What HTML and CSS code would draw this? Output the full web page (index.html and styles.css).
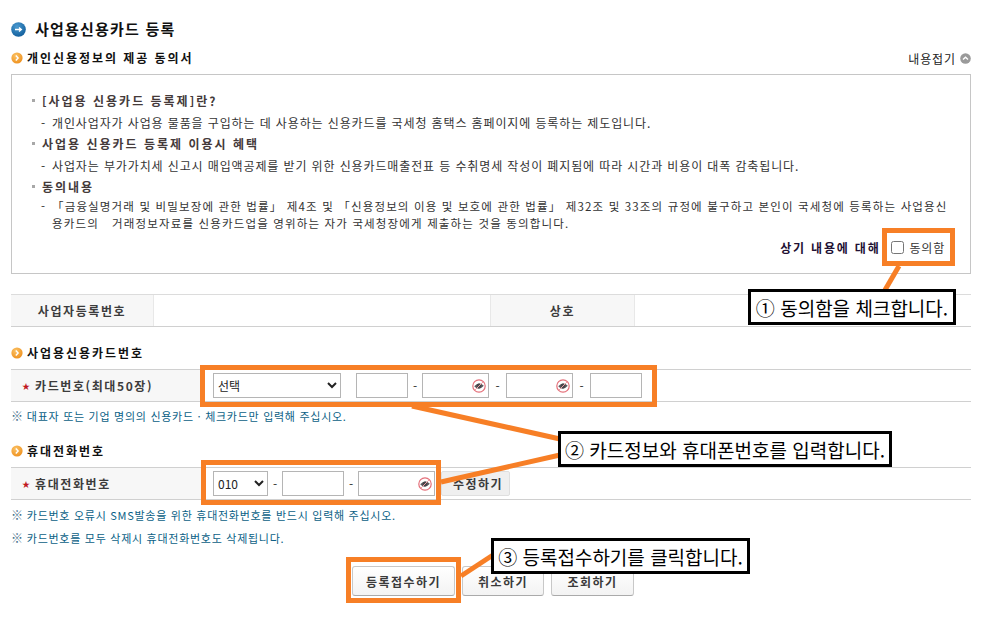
FILE: index.html
```html
<!DOCTYPE html>
<html lang="ko">
<head>
<meta charset="utf-8">
<title>사업용신용카드 등록</title>
<link rel="stylesheet" href="styles.css">
</head>
<body>
<svg class="defs" width="0" height="0" aria-hidden="true">
  <defs>
    <radialGradient id="gBlue" cx="40%" cy="30%" r="75%"><stop offset="0" stop-color="#4a9ad0"/><stop offset="1" stop-color="#0f5c9a"/></radialGradient>
    <radialGradient id="gOrange" cx="40%" cy="30%" r="75%"><stop offset="0" stop-color="#fbc265"/><stop offset="1" stop-color="#ee8f1c"/></radialGradient>
    <symbol id="sec" viewBox="0 0 12 12"><circle cx="6" cy="6" r="5.6" fill="url(#gOrange)"/><path d="M4.8 3.6 7.1 6 4.8 8.4" fill="none" stroke="#fff" stroke-width="1.4"/></symbol>
    <symbol id="eye" viewBox="0 0 14 14"><circle cx="7" cy="7" r="6.2" fill="#fff" stroke="#e4707a" stroke-width="1.2"/><path d="M2.2 7.2Q7 1.8 11.8 6.8 7 12.4 2.2 7.2Z" fill="#5c5c60"/><circle cx="7" cy="7" r="2.4" fill="#46464a"/><path d="M2.8 11.2 11.2 2.8" stroke="#efa0a6" stroke-width="1"/></symbol>
  </defs>
</svg>
<main class="page">
  <h1 class="title">
    <svg class="title-icon" width="15" height="15" viewBox="0 0 15 15"><circle cx="7.5" cy="7.5" r="7.3" fill="url(#gBlue)"/><path d="M4 7.5h6M8 5.4l2.4 2.1L8 9.6" fill="none" stroke="#fff" stroke-width="1.3"/></svg>
    사업용신용카드 등록
  </h1>

  <div class="sec first-sec">
    <h2 class="sec-title"><svg class="sec-icon"><use href="#sec"/></svg>개인신용정보의 제공 동의서</h2>
    <span class="fold">내용접기
      <svg class="fold-icon" width="11" height="11" viewBox="0 0 11 11"><circle cx="5.5" cy="5.5" r="5.3" fill="#9a9a9a"/><path d="M3 6.6 5.5 4.2 8 6.6" fill="none" stroke="#fff" stroke-width="1.4"/></svg>
    </span>
  </div>

  <section class="agree-box">
    <h3 class="term-h">[사업용 신용카드 등록제]란?</h3>
    <p class="term-p">개인사업자가 사업용 물품을 구입하는 데 사용하는 신용카드를 국세청 홈택스 홈페이지에 등록하는 제도입니다.</p>
    <h3 class="term-h">사업용 신용카드 등록제 이용시 혜택</h3>
    <p class="term-p">사업자는 부가가치세 신고시 매입액공제를 받기 위한 신용카드매출전표 등 수취명세 작성이 폐지됨에 따라 시간과 비용이 대폭 감축됩니다.</p>
    <h3 class="term-h">동의내용</h3>
    <p class="term-p term-long">「금융실명거래 및 비밀보장에 관한 법률」 제4조 및 「신용정보의 이용 및 보호에 관한 법률」 제32조 및 33조의 규정에 불구하고 본인이 국세청에 등록하는 사업용신<wbr>용카드의&nbsp;&nbsp; 거래정보자료를 신용카드업을 영위하는 자가 국세청장에게 제출하는 것을 동의합니다.</p>
    <div class="agree-row">
      <strong class="agree-q">상기 내용에 대해</strong>
      <label class="agree-check"><input type="checkbox" class="check">동의함</label>
    </div>
  </section>

  <div class="row row-info">
    <div class="th th-biz">사업자등록번호</div>
    <div class="td td-biz"></div>
    <div class="th th-name">상호</div>
    <div class="td td-name"></div>
  </div>

  <div class="sec sec-card">
    <h2 class="sec-title"><svg class="sec-icon"><use href="#sec"/></svg>사업용신용카드번호</h2>
  </div>
  <div class="row">
    <div class="th th-form"><span class="star">★</span>카드번호(최대50장)</div>
    <div class="td controls">
      <select class="ctl sel-card"><option>선택</option></select>
      <input class="ctl in-a" type="text">
      <span class="dash">-</span>
      <span class="secret"><input class="ctl in-b" type="text"><svg class="eye"><use href="#eye"/></svg></span>
      <span class="dash dash-w">-</span>
      <span class="secret"><input class="ctl in-b" type="text"><svg class="eye"><use href="#eye"/></svg></span>
      <span class="dash dash-w">-</span>
      <input class="ctl in-a" type="text">
    </div>
  </div>
  <p class="note note-first"><span class="mark">※</span> 대표자 또는 기업 명의의 신용카드 · 체크카드만 입력해 주십시오.</p>

  <div class="sec sec-phone">
    <h2 class="sec-title"><svg class="sec-icon"><use href="#sec"/></svg>휴대전화번호</h2>
  </div>
  <div class="row">
    <div class="th th-form"><span class="star">★</span>휴대전화번호</div>
    <div class="td controls">
      <select class="ctl sel-phone"><option>010</option></select>
      <span class="dash">-</span>
      <input class="ctl in-c" type="text">
      <span class="dash">-</span>
      <span class="secret"><input class="ctl in-d" type="text"><svg class="eye"><use href="#eye"/></svg></span>
      <button class="edit" type="button">수정하기</button>
    </div>
  </div>
  <p class="note"><span class="mark">※</span> 카드번호 오류시 SMS발송을 위한 휴대전화번호를 반드시 입력해 주십시오.</p>
  <p class="note"><span class="mark">※</span> 카드번호를 모두 삭제시 휴대전화번호도 삭제됩니다.</p>

  <div class="actions">
    <button class="btn btn-reg" type="button">등록접수하기</button>
    <button class="btn btn-cancel" type="button">취소하기</button>
    <button class="btn btn-view" type="button">조회하기</button>
  </div>
</main>

<svg class="leaders" width="984" height="622" viewBox="0 0 984 622" aria-hidden="true">
  <path d="M899 266 885 290" />
  <path d="M412 406 560 439" />
  <path d="M441 482 560 455" />
  <path d="M461 576 493 555" />
</svg>
<div class="hl hl-check"></div>
<div class="hl hl-card"></div>
<div class="hl hl-phone"></div>
<div class="hl hl-btn"></div>
<div class="callout call-1">① 동의함을 체크합니다.</div>
<div class="callout call-2">② 카드정보와 휴대폰번호를 입력합니다.</div>
<div class="callout call-3">③ 등록접수하기를 클릭합니다.</div>
</body>
</html>
```
FILE: styles.css
```css
* { box-sizing: border-box; }
html, body { margin: 0; padding: 0; background: #fff; }
body {
  position: relative;
  width: 984px;
  height: 622px;
  overflow: hidden;
  font-family: "Noto Sans CJK KR", "Liberation Sans", sans-serif;
  font-size: 12px;
  color: #333;
}
.defs { position: absolute; }
.page { padding: 20px 13px 0 11px; }

.title {
  margin: 0;
  height: 18px;
  display: flex;
  align-items: center;
  font-size: 15px;
  line-height: 18px;
  font-weight: 700;
  color: #111;
  letter-spacing: 1.2px;
}
.title-icon { margin-right: 9px; flex: none; }

.sec { height: 16px; margin-bottom: 8px; display: flex; align-items: center; justify-content: space-between; }
.first-sec { margin-top: 12px; }
.sec-card { margin-top: 18px; }
.sec-phone { margin-top: 19px; }
.sec-title {
  margin: 0;
  display: flex;
  align-items: center;
  font-size: 12px;
  line-height: 14px;
  font-weight: 700;
  color: #111;
  letter-spacing: 1.95px;
}
.sec-icon { width: 12px; height: 12px; margin-right: 4px; flex: none; }
.fold { display: flex; align-items: center; font-size: 12px; color: #222; letter-spacing: 0.9px; }
.fold-icon { margin-left: 4px; }

.agree-box {
  height: 200px;
  border: 1px solid #c6c6c6;
  padding: 15px 15px 0 20px;
}
.term-h {
  position: relative;
  margin: 0;
  padding-left: 10px;
  font-size: 12px;
  line-height: 21.5px;
  font-weight: 700;
  color: #443a3a;
  letter-spacing: 2px;
}
.term-h::before {
  content: "";
  position: absolute;
  left: 0;
  top: 9px;
  width: 3px;
  height: 3px;
  background: #a8a8a8;
}
.term-p {
  position: relative;
  margin: 0;
  padding-left: 20px;
  font-size: 12px;
  line-height: 21.5px;
  color: #333;
  letter-spacing: 0.88px;
}
.term-p::before {
  content: "-";
  position: absolute;
  left: 9px;
}
.term-long {
  font-size: 11.5px;
  line-height: 17px;
  letter-spacing: 1.15px;
  word-break: keep-all;
}
.agree-row {
  margin-top: 5px;
  height: 22px;
  display: flex;
  align-items: center;
  justify-content: flex-end;
  padding-right: 10px;
}
.agree-q { font-size: 12px; color: #221133; margin-right: 11px; letter-spacing: 1.8px; }
.agree-check { display: flex; align-items: center; font-size: 12px; color: #333; letter-spacing: 0.8px; }
.check { width: 13px; height: 13px; margin: 0 5px 0 0; }

.row {
  display: flex;
  height: 33px;
  border-top: 1px solid #d0d0d0;
  border-bottom: 1px solid #d0d0d0;
}
.row-info { margin-top: 20px; border-color: #dcdcdc #dcdcdc #d0d0d0; }
.th {
  display: flex;
  align-items: center;
  background: #f7f7f7;
  font-size: 12px;
  font-weight: 700;
  color: #3c3c3c;
  letter-spacing: 1.6px;
}
.th-biz { width: 143px; justify-content: center; border-right: 1px solid #e8e8e8; }
.td-biz { width: 336px; }
.th-name { width: 145px; justify-content: center; border: solid #e8e8e8; border-width: 0 1px; }
.td-name { flex: 1; }
.th-form { width: 191px; padding-left: 11px; }
.star { color: #c0181f; width: 13px; font-size: 8px; font-weight: 400; letter-spacing: 0; }
.controls { display: flex; align-items: center; padding-left: 11px; flex: 1; }

.ctl {
  height: 25px;
  margin: 0;
  padding: 0 0 0 4px;
  border: 1px solid #b5b5b5;
  background: #fff;
  font-family: inherit;
  font-size: 12px;
  color: #222;
  border-radius: 0;
}
select.ctl { padding-left: 0; }
.sel-card { width: 128px; margin-right: 15px; }
.sel-phone { width: 55px; }
.in-a { width: 52px; }
.in-b { width: 67px; display: block; }
.in-c { width: 62px; }
.in-d { width: 77px; display: block; }
.dash { width: 14px; text-align: center; color: #333; }
.dash-w { width: 17px; }
.secret { position: relative; display: block; }
.eye { position: absolute; right: 3px; top: 6px; width: 14px; height: 14px; }

.edit {
  width: 69px;
  height: 25px;
  margin-left: 6px;
  padding: 0 0 0 5px;
  border: 1px solid #dfdfdf;
  border-radius: 2px;
  background: #efefef;
  font-family: inherit;
  font-size: 12px;
  font-weight: 700;
  color: #3a3a3a;
  letter-spacing: 1.5px;
}

.note {
  margin: 7px 0 0;
  height: 16px;
  font-size: 11px;
  line-height: 16px;
  color: #0b5f86;
  letter-spacing: 0.72px;
  white-space: nowrap;
}
.note-first { margin-top: 6px; }
.mark { font-size: 12px; color: #44708a; letter-spacing: 0; }

.actions { display: flex; margin-top: 20px; padding-left: 341px; }
.btn {
  height: 30px;
  padding: 0;
  border: 1px solid #c8c8c8;
  border-bottom-color: #aaa;
  border-radius: 3px;
  background: linear-gradient(#fff, #f3f3f3);
  font-family: inherit;
  font-size: 12px;
  font-weight: 700;
  color: #3a3a3a;
  letter-spacing: 1.5px;
}
.btn-reg { width: 103px; margin-right: 7px; }
.btn-cancel { width: 82px; margin-right: 7px; }
.btn-view { width: 83px; }

.leaders { position: absolute; left: 0; top: 0; }
.leaders path { stroke: #f77f26; stroke-width: 5; fill: none; }
.hl { position: absolute; border: 5px solid #f77f26; }
.hl-check { left: 882px; top: 228px; width: 73px; height: 38px; }
.hl-card { left: 200px; top: 365px; width: 457px; height: 42px; }
.hl-phone { left: 201px; top: 460px; width: 240px; height: 45px; }
.hl-btn { left: 346px; top: 557px; width: 115px; height: 46px; }
.callout {
  position: absolute;
  display: flex;
  align-items: center;
  justify-content: center;
  height: 36px;
  border: 3px solid #000;
  background: #fff;
  font-size: 19px;
  line-height: 1;
  color: #000;
  white-space: nowrap;
}
.call-1 { left: 748px; top: 289px; width: 208px; }
.call-2 { left: 558px; top: 431px; width: 334px; }
.call-3 { left: 491px; top: 538px; width: 259px; }
```
